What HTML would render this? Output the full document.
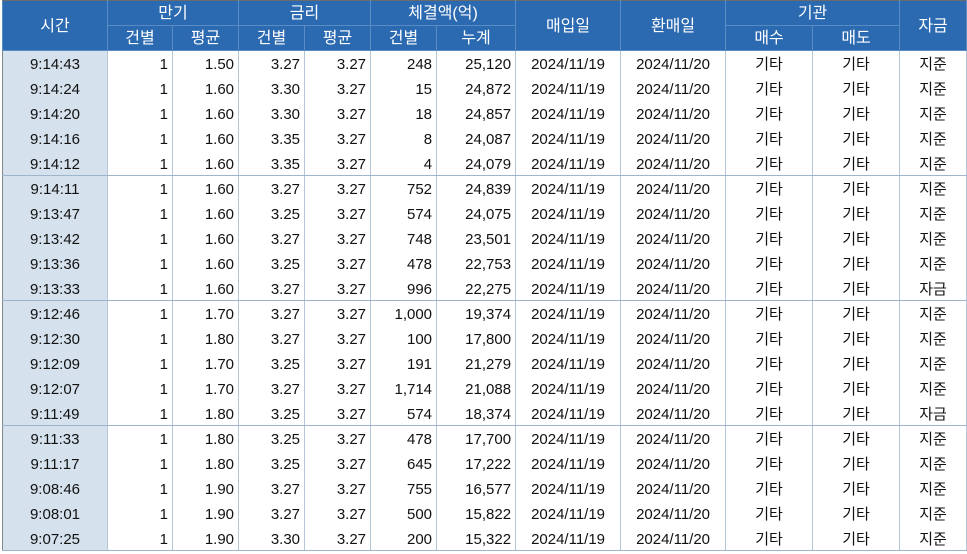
<!DOCTYPE html><html><head><meta charset="utf-8"><style>
body{margin:0;background:#fff;width:967px;height:554px;overflow:hidden;font-family:"Liberation Sans","Noto Sans CJK KR",sans-serif}
table{position:absolute;left:2px;top:0;width:964px;border-collapse:collapse;table-layout:fixed;font-size:15px}
tr{height:25px}
td,th{padding:0;border-right:1px solid #b4c6d8;white-space:nowrap;overflow:hidden}
th{background:#2b69b0;color:#fff;font-weight:normal;font-size:16px;border:1px solid #5a8cc4;text-align:center;padding-top:1px;height:23px;line-height:23px}
thead tr:first-child th{border-top:1px solid #6a6a6a}
td{text-align:right;padding-right:4px;color:#111;padding-top:3px;height:21px;line-height:21px}
td.t{background:#d5e1ec;text-align:center;padding-right:0;border-left:1px solid #888}
td.c{text-align:center;padding-right:0}
tr.g td{border-bottom:1px solid #9fb5cc}
</style></head><body>
<table>
<colgroup><col style="width:105px"><col style="width:65px"><col style="width:66px"><col style="width:66px"><col style="width:66px"><col style="width:66px"><col style="width:79px"><col style="width:105px"><col style="width:105px"><col style="width:87px"><col style="width:87px"><col style="width:67px"></colgroup>
<thead>
<tr><th rowspan="2">시간</th><th colspan="2">만기</th><th colspan="2">금리</th><th colspan="2">체결액(억)</th><th rowspan="2">매입일</th><th rowspan="2">환매일</th><th colspan="2">기관</th><th rowspan="2">자금</th></tr>
<tr><th>건별</th><th>평균</th><th>건별</th><th>평균</th><th>건별</th><th>누계</th><th>매수</th><th>매도</th></tr>
</thead>
<tbody>
<tr><td class="t">9:14:43</td><td>1</td><td>1.50</td><td>3.27</td><td>3.27</td><td>248</td><td>25,120</td><td class="c">2024/11/19</td><td class="c">2024/11/20</td><td class="c">기타</td><td class="c">기타</td><td class="c">지준</td></tr>
<tr><td class="t">9:14:24</td><td>1</td><td>1.60</td><td>3.30</td><td>3.27</td><td>15</td><td>24,872</td><td class="c">2024/11/19</td><td class="c">2024/11/20</td><td class="c">기타</td><td class="c">기타</td><td class="c">지준</td></tr>
<tr><td class="t">9:14:20</td><td>1</td><td>1.60</td><td>3.30</td><td>3.27</td><td>18</td><td>24,857</td><td class="c">2024/11/19</td><td class="c">2024/11/20</td><td class="c">기타</td><td class="c">기타</td><td class="c">지준</td></tr>
<tr><td class="t">9:14:16</td><td>1</td><td>1.60</td><td>3.35</td><td>3.27</td><td>8</td><td>24,087</td><td class="c">2024/11/19</td><td class="c">2024/11/20</td><td class="c">기타</td><td class="c">기타</td><td class="c">지준</td></tr>
<tr class="g"><td class="t">9:14:12</td><td>1</td><td>1.60</td><td>3.35</td><td>3.27</td><td>4</td><td>24,079</td><td class="c">2024/11/19</td><td class="c">2024/11/20</td><td class="c">기타</td><td class="c">기타</td><td class="c">지준</td></tr>
<tr><td class="t">9:14:11</td><td>1</td><td>1.60</td><td>3.27</td><td>3.27</td><td>752</td><td>24,839</td><td class="c">2024/11/19</td><td class="c">2024/11/20</td><td class="c">기타</td><td class="c">기타</td><td class="c">지준</td></tr>
<tr><td class="t">9:13:47</td><td>1</td><td>1.60</td><td>3.25</td><td>3.27</td><td>574</td><td>24,075</td><td class="c">2024/11/19</td><td class="c">2024/11/20</td><td class="c">기타</td><td class="c">기타</td><td class="c">지준</td></tr>
<tr><td class="t">9:13:42</td><td>1</td><td>1.60</td><td>3.27</td><td>3.27</td><td>748</td><td>23,501</td><td class="c">2024/11/19</td><td class="c">2024/11/20</td><td class="c">기타</td><td class="c">기타</td><td class="c">지준</td></tr>
<tr><td class="t">9:13:36</td><td>1</td><td>1.60</td><td>3.25</td><td>3.27</td><td>478</td><td>22,753</td><td class="c">2024/11/19</td><td class="c">2024/11/20</td><td class="c">기타</td><td class="c">기타</td><td class="c">지준</td></tr>
<tr class="g"><td class="t">9:13:33</td><td>1</td><td>1.60</td><td>3.27</td><td>3.27</td><td>996</td><td>22,275</td><td class="c">2024/11/19</td><td class="c">2024/11/20</td><td class="c">기타</td><td class="c">기타</td><td class="c">자금</td></tr>
<tr><td class="t">9:12:46</td><td>1</td><td>1.70</td><td>3.27</td><td>3.27</td><td>1,000</td><td>19,374</td><td class="c">2024/11/19</td><td class="c">2024/11/20</td><td class="c">기타</td><td class="c">기타</td><td class="c">지준</td></tr>
<tr><td class="t">9:12:30</td><td>1</td><td>1.80</td><td>3.27</td><td>3.27</td><td>100</td><td>17,800</td><td class="c">2024/11/19</td><td class="c">2024/11/20</td><td class="c">기타</td><td class="c">기타</td><td class="c">지준</td></tr>
<tr><td class="t">9:12:09</td><td>1</td><td>1.70</td><td>3.25</td><td>3.27</td><td>191</td><td>21,279</td><td class="c">2024/11/19</td><td class="c">2024/11/20</td><td class="c">기타</td><td class="c">기타</td><td class="c">지준</td></tr>
<tr><td class="t">9:12:07</td><td>1</td><td>1.70</td><td>3.27</td><td>3.27</td><td>1,714</td><td>21,088</td><td class="c">2024/11/19</td><td class="c">2024/11/20</td><td class="c">기타</td><td class="c">기타</td><td class="c">지준</td></tr>
<tr class="g"><td class="t">9:11:49</td><td>1</td><td>1.80</td><td>3.25</td><td>3.27</td><td>574</td><td>18,374</td><td class="c">2024/11/19</td><td class="c">2024/11/20</td><td class="c">기타</td><td class="c">기타</td><td class="c">자금</td></tr>
<tr><td class="t">9:11:33</td><td>1</td><td>1.80</td><td>3.25</td><td>3.27</td><td>478</td><td>17,700</td><td class="c">2024/11/19</td><td class="c">2024/11/20</td><td class="c">기타</td><td class="c">기타</td><td class="c">지준</td></tr>
<tr><td class="t">9:11:17</td><td>1</td><td>1.80</td><td>3.25</td><td>3.27</td><td>645</td><td>17,222</td><td class="c">2024/11/19</td><td class="c">2024/11/20</td><td class="c">기타</td><td class="c">기타</td><td class="c">지준</td></tr>
<tr><td class="t">9:08:46</td><td>1</td><td>1.90</td><td>3.27</td><td>3.27</td><td>755</td><td>16,577</td><td class="c">2024/11/19</td><td class="c">2024/11/20</td><td class="c">기타</td><td class="c">기타</td><td class="c">지준</td></tr>
<tr><td class="t">9:08:01</td><td>1</td><td>1.90</td><td>3.27</td><td>3.27</td><td>500</td><td>15,822</td><td class="c">2024/11/19</td><td class="c">2024/11/20</td><td class="c">기타</td><td class="c">기타</td><td class="c">지준</td></tr>
<tr class="g"><td class="t">9:07:25</td><td>1</td><td>1.90</td><td>3.30</td><td>3.27</td><td>200</td><td>15,322</td><td class="c">2024/11/19</td><td class="c">2024/11/20</td><td class="c">기타</td><td class="c">기타</td><td class="c">지준</td></tr>
</tbody></table>
</body></html>
